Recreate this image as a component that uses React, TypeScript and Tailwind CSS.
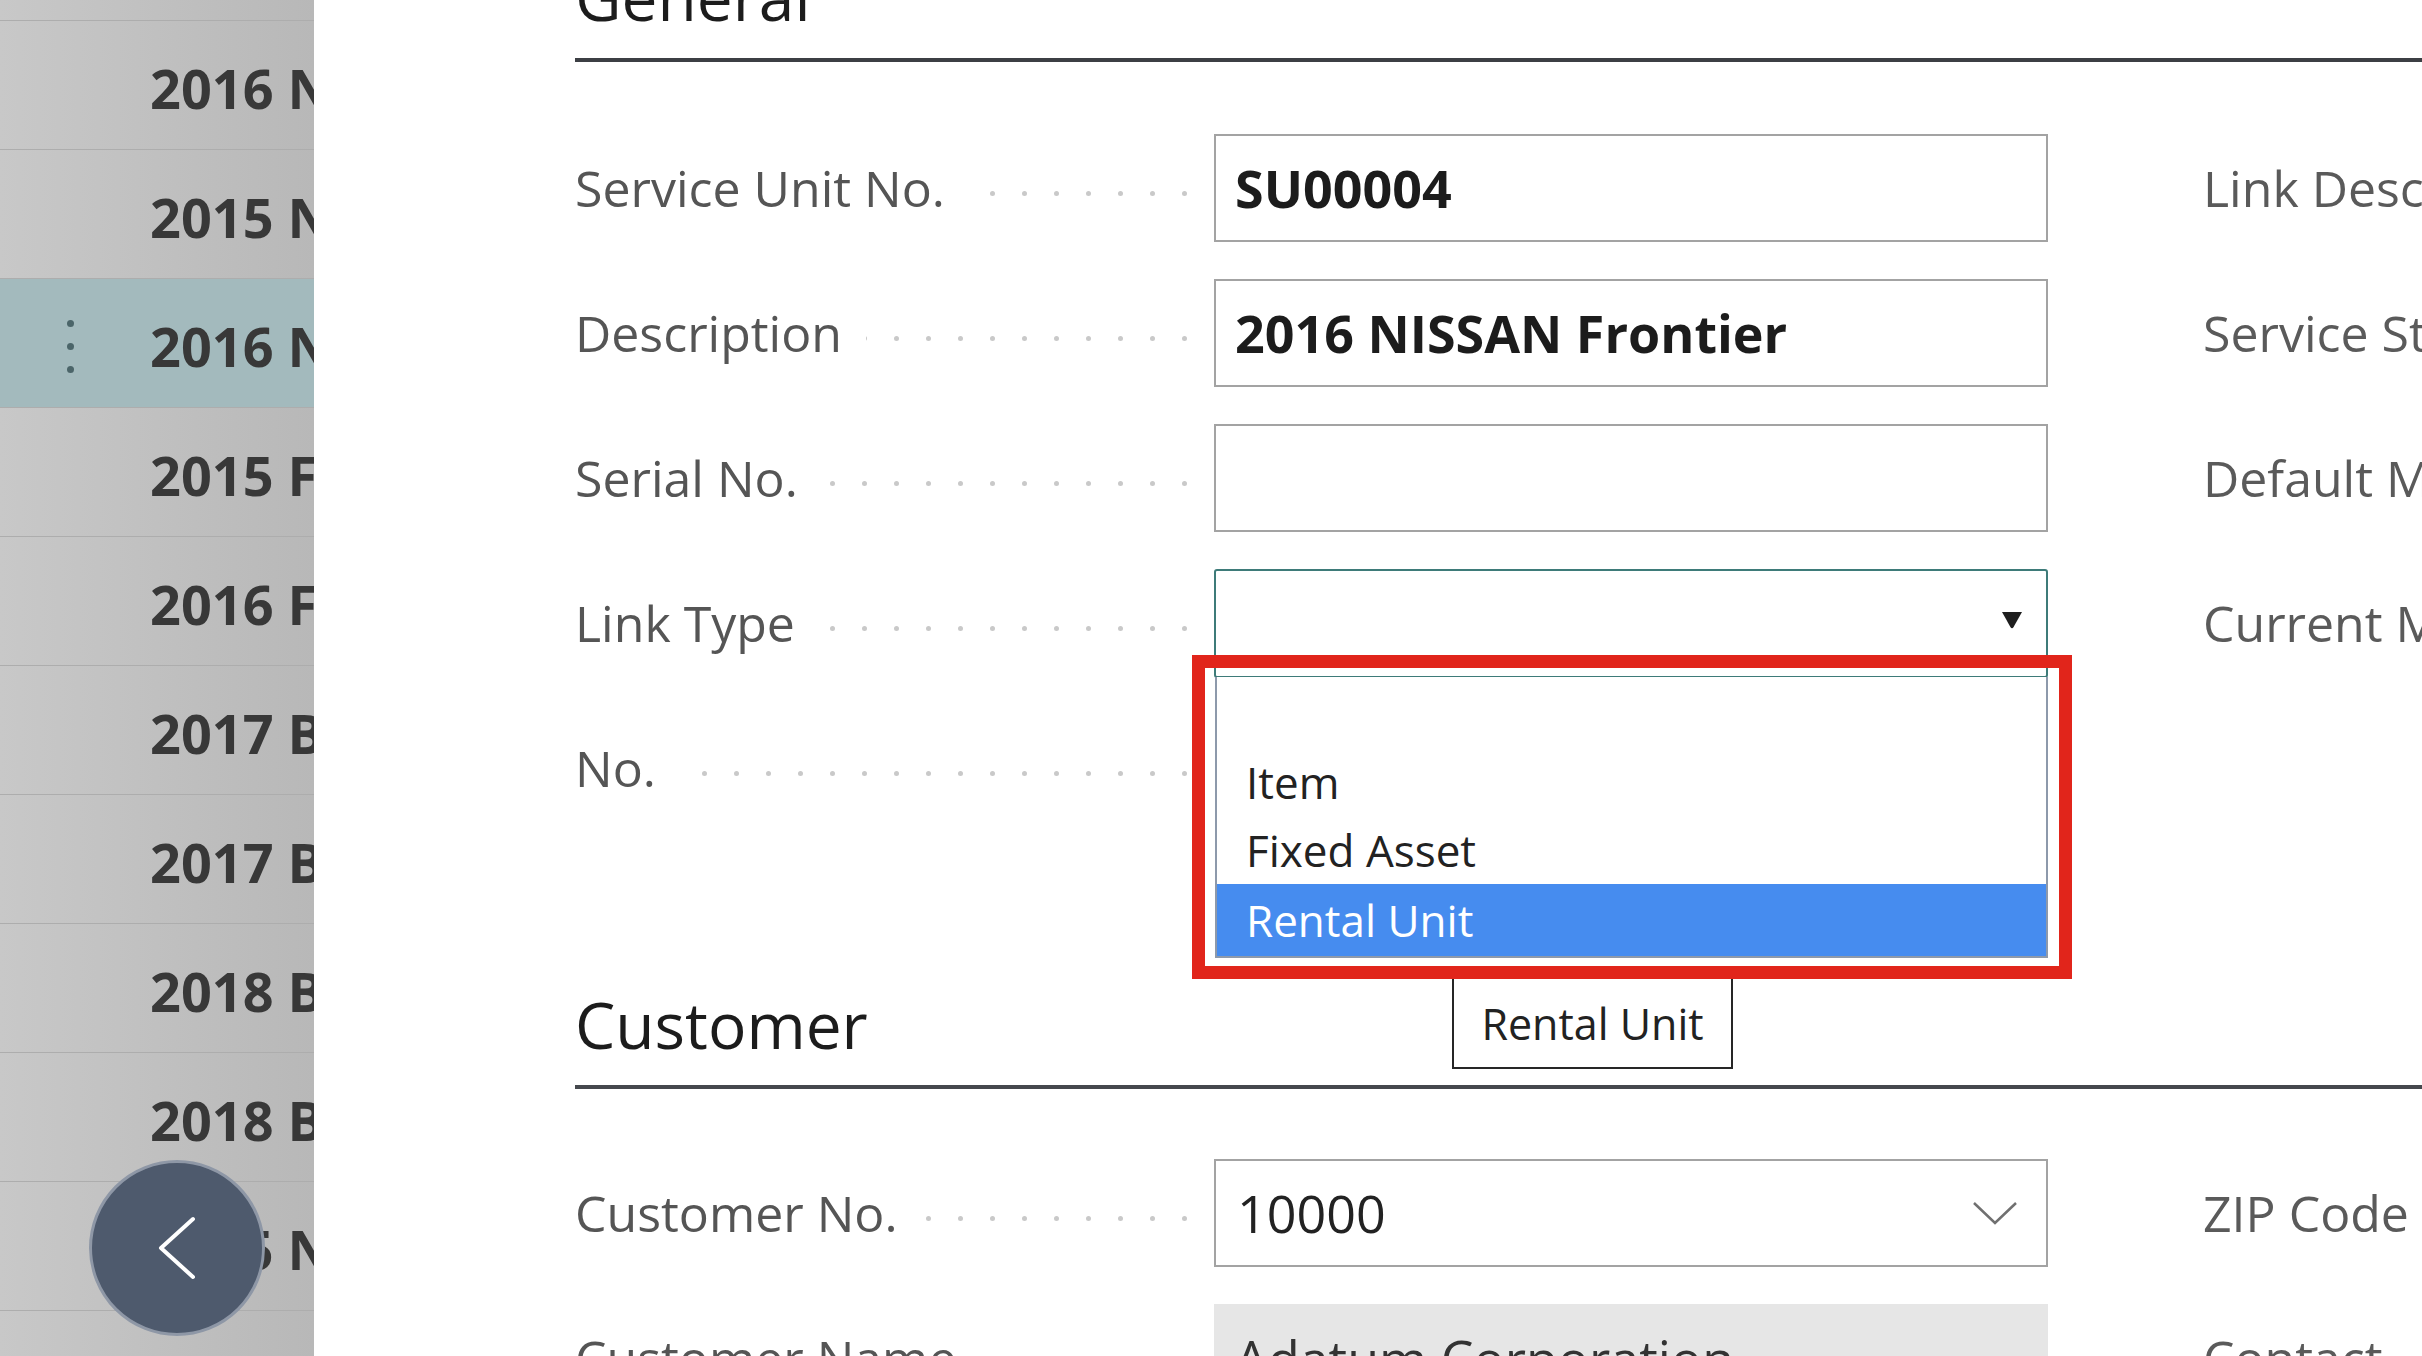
import type { ReactNode } from 'react'

const units = [
  '2016 NISSAN Titan',
  '2015 NISSAN Altima',
  '2016 NISSAN Frontier',
  '2015 FORD F-150',
  '2016 FORD Escape',
  '2017 BMW X3',
  '2017 BMW X5',
  '2018 BMW 330i',
  '2018 BMW X1',
  '2015 NISSAN Rogue',
  '2019 FORD Edge',
]
const SELECTED = 2

function Sidebar() {
  return (
    <aside className="relative h-full w-[314px] shrink-0 overflow-hidden bg-linear-to-r from-[#c8c8c8] to-[#b8b8b8]">
      <div className="h-[20px]" />
      {units.map((u, i) => (
        <div
          key={i}
          className={`flex h-[129px] items-center overflow-hidden border-t border-[#adadad] pt-[6px] ${
            i === SELECTED ? 'bg-[#a3babd] pl-[67px]' : 'pl-[150px]'
          }`}
        >
          {i === SELECTED && (
            <div className="mr-[76px] flex w-[7px] shrink-0 flex-col gap-[16px]">
              {[0, 1, 2].map((d) => (
                <span key={d} className="h-[7px] w-[7px] rounded-full bg-[#4b6569]" />
              ))}
            </div>
          )}
          <span className="whitespace-nowrap text-[54px] font-bold leading-none text-[#383838]">{u}</span>
        </div>
      ))}

      {/* collapse button */}
      <button
        type="button"
        className="absolute left-[89px] top-[1160px] flex h-[176px] w-[176px] items-center justify-center rounded-full border-[3px] border-[#8e97a6] bg-[#4e5a6d]"
      >
        <svg width="40" height="64" viewBox="0 0 40 64" fill="none">
          <polyline points="36,3 4,32 36,61" stroke="#ffffff" strokeWidth="4" strokeLinecap="round" strokeLinejoin="round" />
        </svg>
      </button>
    </aside>
  )
}

function Dots() {
  return (
    <div className="ml-[24px] mt-[10px] flex flex-1 justify-end gap-[27px] overflow-hidden">
      {Array.from({ length: 20 }).map((_, i) => (
        <span key={i} className="h-[5px] w-[5px] shrink-0 rounded-full bg-[#c9c9c9]" />
      ))}
    </div>
  )
}

interface RowProps {
  label: string
  right?: string
  children?: ReactNode
}

function Row({ label, right, children }: RowProps) {
  return (
    <div className="flex h-[108px] items-center">
      <div className="flex w-[612px] shrink-0 items-center">
        <span className="whitespace-nowrap text-[50px] leading-none text-[#555555]">{label}</span>
        <Dots />
      </div>
      <div className="ml-[27px] h-full w-[834px] shrink-0">{children}</div>
      {right && (
        <span className="ml-[155px] whitespace-nowrap text-[50px] leading-none text-[#5a5a5a]">{right}</span>
      )}
    </div>
  )
}

function TextBox({ value, bold = false }: { value: string; bold?: boolean }) {
  return (
    <div
      className={`flex h-full items-center border-2 border-[#a3a3a3] bg-white pl-[19px] text-[52px] leading-none text-[#1c1c1c] ${
        bold ? 'font-bold' : ''
      }`}
    >
      {value}
    </div>
  )
}

export default function App() {
  return (
    <div className="flex h-[1356px] w-[2422px] overflow-hidden bg-white font-['Open_Sans',sans-serif]">
      <Sidebar />

      <main className="relative h-full flex-1 overflow-hidden bg-white pl-[261px]">
        {/* General */}
        <div className="-mt-[35px] border-b-4 border-[#3c3f44] pb-[29px]">
          <h2 className="text-[64px] leading-[64px] text-[#1c1c1c]">General</h2>
        </div>

        <div className="mt-[72px] flex flex-col gap-[37px]">
          <Row label="Service Unit No." right="Link Description">
            <TextBox value="SU00004" bold />
          </Row>
          <Row label="Description" right="Service Status">
            <TextBox value="2016 NISSAN Frontier" bold />
          </Row>
          <Row label="Serial No." right="Default Meter">
            <TextBox value="" />
          </Row>
          <Row label="Link Type" right="Current Meter">
            <div className="flex h-[109px] items-center justify-end rounded-[3px] border-2 border-[#3e7b79] bg-white pr-[23px]">
              <svg width="22" height="18" viewBox="0 0 22 18" className="mb-[8px]">
                <path d="M1 1 H21 L12.6 16 Q11 18.4 9.4 16 Z" fill="#1e1e1e" />
              </svg>
            </div>
          </Row>
          <Row label="No." />
        </div>

        {/* Customer */}
        <div className="mt-[171px] border-b-4 border-[#45484d] pb-[28px]">
          <h2 className="text-[64px] leading-[64px] text-[#1c1c1c]">Customer</h2>
        </div>

        <div className="mt-[70px] flex flex-col gap-[37px]">
          <Row label="Customer No." right="ZIP Code">
            <div className="flex h-full items-center justify-between border-2 border-[#a3a3a3] bg-white pl-[21px] pr-[28px] text-[52px] leading-none text-[#222222]">
              <span>10000</span>
              <svg width="46" height="24" viewBox="0 0 46 24" fill="none">
                <polyline points="2,2 23,22 44,2" stroke="#707070" strokeWidth="2.5" />
              </svg>
            </div>
          </Row>
          <Row label="Customer Name" right="Contact">
            <div className="flex h-full items-center bg-[#e6e6e6] pl-[21px] text-[52px] leading-none text-[#333333]">
              Adatum Corporation
            </div>
          </Row>
        </div>

        {/* open option list */}
        <div className="absolute left-[901px] top-[677px] w-[833px] border-x-2 border-b-2 border-[#8d99ab] bg-white pt-[3px] text-[44px] leading-none">
          <div className="h-[68px]" />
          <div className="flex h-[68px] items-center pl-[29px] text-[#222222]">Item</div>
          <div className="flex h-[68px] items-center pl-[29px] text-[#222222]">Fixed Asset</div>
          <div className="flex h-[72px] items-center bg-[#468cef] pl-[29px] text-white">Rental Unit</div>
        </div>

        {/* tooltip */}
        <div className="absolute left-[1138px] top-[972px] flex h-[97px] w-[281px] items-center justify-center border-2 border-[#262626] bg-white pt-[6px] text-[43px] leading-none text-[#222222]">
          Rental Unit
        </div>

        {/* highlight frame */}
        <div className="pointer-events-none absolute left-[878px] top-[655px] z-10 h-[324px] w-[880px] border-[13px] border-[#e1251b]" />
      </main>
    </div>
  )
}
